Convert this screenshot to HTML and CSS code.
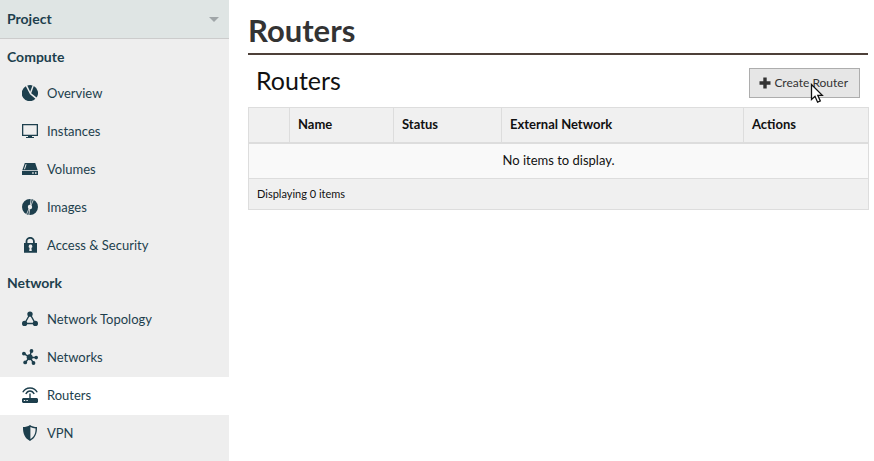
FILE: index.html
```html
<!DOCTYPE html>
<html lang="en">
<head>
<meta charset="utf-8">
<meta name="viewport" content="width=device-width, initial-scale=1">
<title>Routers</title>
<link rel="stylesheet" href="styles.css">
</head>
<body>
<div class="page">
  <nav class="sidebar">
    <button class="panel-toggle" type="button">Project<span class="caret"></span></button>
    <h4 class="group-title">Compute</h4>
    <ul class="menu">
      <li><a class="item" href="#overview">
        <svg class="icon" viewBox="0 0 16 16"><path d="M5.3 0.5A8 8 0 0 1 10.5 0.4L8.2 6.8Z"/><path d="M3.8 1.2L8 9.2L13.4 13.8A8 8 0 1 1 3.8 1.2Z"/><path d="M11.8 1A8 8 0 0 1 14.6 12.6L9.2 8.2Z"/></svg>
        Overview</a></li>
      <li><a class="item" href="#instances">
        <svg class="icon" viewBox="0 0 16 16"><path fill-rule="evenodd" d="M0 1H16V13H0ZM1.3 2.3V11.7H14.7V2.3Z"/><path d="M6 13H10V14H12V15H4V14H6Z"/></svg>
        Instances</a></li>
      <li><a class="item" href="#volumes">
        <svg class="icon" viewBox="0 0 16 16"><path fill-rule="evenodd" d="M2.8 2H13.2L15.7 9.2H0.3ZM3.6 3.2L2 8.2H3L4.6 3.2Z"/><path fill-rule="evenodd" d="M0 10H16V14H0ZM10.2 11.3V12.7H11.7V11.3ZM13 11.3V12.7H14.5V11.3Z"/></svg>
        Volumes</a></li>
      <li><a class="item" href="#images">
        <svg class="icon" viewBox="0 0 16 16"><path fill-rule="evenodd" d="M8 0A8 8 0 1 1 8 16A8 8 0 1 1 8 0ZM8 5.8A2.2 2.2 0 1 0 8 10.2A2.2 2.2 0 1 0 8 5.8Z"/><path class="cut" d="M9.1 0L8.3 6M11.5 0.6L9 6.4M6.9 16L7.7 10M4.5 15.4L7 9.6"/></svg>
        Images</a></li>
      <li><a class="item" href="#security">
        <svg class="icon" viewBox="0 0 16 16"><path class="line lock" d="M4.5 7V4.3A3.7 3.5 0 0 1 11.9 4.3V7"/><path fill-rule="evenodd" d="M2 6H15V15.8H2ZM8.5 7.6A1.8 1.8 0 0 0 7.6 11L7.2 14H9.8L9.4 11A1.8 1.8 0 0 0 8.5 7.6Z"/></svg>
        Access &amp; Security</a></li>
    </ul>
    <h4 class="group-title">Network</h4>
    <ul class="menu">
      <li><a class="item" href="#topology">
        <svg class="icon" viewBox="0 0 16 16"><path class="line" d="M8 3L2.7 12.5H13.3Z"/><circle cx="8" cy="3.1" r="2.7"/><circle cx="2.6" cy="12.4" r="2.6"/><circle cx="13.4" cy="12.4" r="2.6"/></svg>
        Network Topology</a></li>
      <li><a class="item" href="#networks">
        <svg class="icon" viewBox="0 0 16 16"><path class="line" d="M7.7 8.3L9.3 2M7.7 8.3L14.2 8.5M7.7 8.3L11.6 14M7.7 8.3L3.3 13.5M7.7 8.3L2 4.6"/><circle cx="7.7" cy="8.3" r="3"/><circle cx="9.5" cy="2" r="1.9"/><circle cx="14.2" cy="8.6" r="1.8"/><circle cx="11.5" cy="14" r="1.9"/><circle cx="3.2" cy="13.4" r="1.9"/><circle cx="1.9" cy="4.6" r="1.9"/></svg>
        Networks</a></li>
      <li><a class="item active" href="#routers" aria-current="page">
        <svg class="icon" viewBox="0 0 16 16"><path class="line" d="M0.8 5.3C3.8 -0.5 12.2 -0.5 15.2 5.3M3.8 7C5.8 3 10.2 3 12.2 7M8 6.5V12"/><path fill-rule="evenodd" d="M1 11H15L16 12V15L15 16H1L0 15V12ZM1.8 13V14.1H3.2V13ZM4.4 13V14.1H5.8V13Z"/></svg>
        Routers</a></li>
      <li><a class="item" href="#vpn">
        <svg class="icon" viewBox="0 0 16 16"><path fill-rule="evenodd" d="M8 0C10 1.4 12.4 2 15 2.1C15.2 9 13 13.5 8 16C3 13.5 0.8 9 1 2.1C3.6 2 6 1.4 8 0ZM8.4 2V14C12 12 13.5 8.8 13.6 3.4C11.7 3.3 10 2.9 8.4 2Z"/></svg>
        VPN</a></li>
    </ul>
  </nav>
  <main class="content">
    <h1 class="page-title">Routers</h1>
    <div class="table-bar">
      <h2 class="table-title">Routers</h2>
      <button class="create" type="button">
        <svg class="plus" viewBox="0 0 12 12"><path d="M4.3 0.5H7.7V4.3H11.5V7.7H7.7V11.5H4.3V7.7H0.5V4.3H4.3Z"/></svg>
        Create Router
        <svg class="pointer" viewBox="0 0 14 21"><path d="M1.5 1.5V16.5L5 13.3L7.6 19.2L10.3 18L7.8 12.3H12.3Z"/></svg>
      </button>
    </div>
    <table class="grid">
      <colgroup><col class="c-check"><col class="c-name"><col class="c-status"><col class="c-net"><col class="c-actions"></colgroup>
      <thead>
        <tr><th></th><th>Name</th><th>Status</th><th>External Network</th><th>Actions</th></tr>
      </thead>
      <tbody>
        <tr><td class="empty" colspan="5">No items to display.</td></tr>
      </tbody>
      <tfoot>
        <tr><td class="count" colspan="5">Displaying 0 items</td></tr>
      </tfoot>
    </table>
  </main>
</div>
</body>
</html>
```
FILE: styles.css
```css
* {
  box-sizing: border-box;
}

body {
  margin: 0;
  background: #fff;
  color: #111;
  font: 13px/20px Lato, "Liberation Sans", sans-serif;
}

.page {
  display: flex;
  min-height: 100vh;
}

.sidebar {
  flex: none;
  width: 229px;
  background: #eee;
  color: #1d3f4d;
}

.panel-toggle {
  display: flex;
  align-items: center;
  justify-content: space-between;
  width: 100%;
  height: 39px;
  padding: 0 10px 0 7px;
  border: 0;
  border-bottom: 1px solid #ccc;
  background: #dfe5e4;
  color: inherit;
  font: bold 14px/20px Lato, "Liberation Sans", sans-serif;
}

.caret {
  border: 5px solid transparent;
  border-top-color: #a0a6a8;
  border-bottom: 0;
}

.group-title {
  margin: 0;
  padding: 8px 7px;
  font-size: 14px;
  line-height: 20px;
}

.menu {
  margin: 0;
  padding: 0;
  list-style: none;
}

.item {
  display: flex;
  align-items: center;
  gap: 9px;
  height: 38px;
  padding: 0 0 2px 22px;
  color: inherit;
  text-decoration: none;
}

.active {
  background: #fff;
}

.icon {
  width: 16px;
  height: 16px;
  fill: #1d3f4d;
}

.line {
  fill: none;
  stroke: #1d3f4d;
  stroke-width: 1.4;
}

.lock {
  stroke-width: 1.8;
}

.cut {
  fill: none;
  stroke: #eee;
  stroke-width: 0.8;
}

.content {
  flex: 1;
  padding: 10px 5px 0 19px;
}

.page-title {
  margin: 0 1px 0 0;
  padding-bottom: 3px;
  border-bottom: 2px solid #4d4039;
  color: #333;
  font-size: 31px;
  line-height: 40px;
}

.table-bar {
  display: flex;
  align-items: center;
  justify-content: space-between;
  height: 52px;
  padding: 4px 9px 0 8px;
}

.table-title {
  margin: 0;
  padding-bottom: 6px;
  font-size: 25px;
  font-weight: normal;
  line-height: 32px;
}

.create {
  position: relative;
  display: flex;
  align-items: center;
  gap: 3px;
  height: 30px;
  padding: 0 11px 0 9px;
  border: 1px solid #adadad;
  background: #e6e6e6;
  color: #333;
  font: 12px/18px Lato, "Liberation Sans", sans-serif;
}

.plus {
  width: 12px;
  height: 12px;
  fill: #333;
}

.pointer {
  position: absolute;
  top: 14px;
  left: 60px;
  width: 14px;
  height: 21px;
  fill: #fff;
  stroke: #111;
  stroke-width: 1.3;
}

.grid {
  width: 100%;
  border: 1px solid #ddd;
  border-collapse: collapse;
  table-layout: fixed;
}

.c-check {
  width: 41px;
}

.c-name {
  width: 104px;
}

.c-status {
  width: 108px;
}

.c-net {
  width: 242px;
}

.grid th {
  height: 35px;
  padding: 0 8px 1px;
  border: 1px solid #ddd;
  border-bottom-width: 2px;
  background: #f0f0f0;
  text-align: left;
}

.grid .empty {
  height: 36px;
  padding: 0 8px 2px;
  background: #f9f9f9;
  text-align: center;
}

.grid .count {
  height: 31px;
  padding: 0 8px;
  border-top: 1px solid #ddd;
  background: #f0f0f0;
  font-size: 11px;
}
```
